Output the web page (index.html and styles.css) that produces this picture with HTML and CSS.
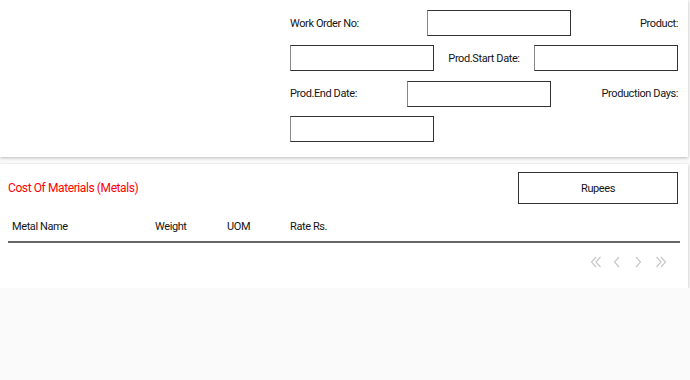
FILE: index.html
```html
<!DOCTYPE html>
<html lang="en">
<head>
  <meta charset="UTF-8">
  <meta name="viewport" content="width=device-width, initial-scale=1.0">
  <title>Work Order Costing</title>
  <link rel="stylesheet" href="styles.css">
</head>
<body>
  <div class="card card-top">
    <div class="spacer"></div>
    <div class="fields">
      <label>Work Order No:</label>
      <input type="text" class="field-input">
      <label>Product:</label>
      <input type="text" class="field-input">
      <label>Prod.Start Date:</label>
      <input type="text" class="field-input">
      <label>Prod.End Date:</label>
      <input type="text" class="field-input">
      <label>Production Days:</label>
      <input type="text" class="field-input">
    </div>
  </div>

  <div class="card card-metals">
    <div class="section-head">
      <span class="section-title">Cost Of Materials (Metals)</span>
      <div class="currency-box">Rupees</div>
    </div>

    <table class="metal-table">
      <thead>
        <tr>
          <th class="col-name">Metal Name</th>
          <th class="col-weight">Weight</th>
          <th class="col-uom">UOM</th>
          <th>Rate Rs.</th>
        </tr>
      </thead>
    </table>

    <div class="pager">
      <!-- first / prev / next / last -->
      <svg width="12" height="12" viewBox="0 0 12 12"><polyline points="6,1 1.5,6 6,11"/><polyline points="10.5,1 6,6 10.5,11"/></svg>
      <svg width="12" height="12" viewBox="0 0 12 12"><polyline points="8,1 3.5,6 8,11"/></svg>
      <svg width="12" height="12" viewBox="0 0 12 12"><polyline points="4,1 8.5,6 4,11"/></svg>
      <svg class="last" width="12" height="12" viewBox="0 0 12 12"><polyline points="1.5,1 6,6 1.5,11"/><polyline points="6,1 10.5,6 6,11"/></svg>
    </div>
  </div>
</body>
</html>
```

FILE: styles.css
```css
body {
  margin: 0;
  background-color: #fafafa;
  font-family: Roboto, "Liberation Sans", sans-serif;
  font-size: 11px;
  letter-spacing: -0.4px;
  color: #151515;
}
.card {
  background-color: #fff;
  margin-right: 2px;
  box-shadow: 0 1px 3px rgba(0,0,0,0.25);
}
.card-top {
  display: flex;
  padding: 10px 10px 15px 0;
}
.spacer {
  flex: 1;
}
.fields {
  width: 388px;
  display: flex;
  flex-wrap: wrap;
  justify-content: space-between;
  align-items: center;
  row-gap: 9.4px;
}
.field-input {
  width: 144px;
  height: 26px;
  box-sizing: border-box;
  border: 1px solid #333;
  border-left-color: #888;
  margin: 0;
  padding: 0 4px;
  font: inherit;
}
.card-metals {
  margin-top: 7px;
  padding: 8px 8px 20px 8px;
}
.section-head {
  display: flex;
  justify-content: space-between;
  align-items: center;
}
.section-title {
  color: #f00;
  font-size: 12px;
}
.currency-box {
  width: 160px;
  height: 32px;
  box-sizing: border-box;
  border: 1px solid #333;
  display: flex;
  align-items: center;
  justify-content: center;
  margin-right: 2px;
}
.metal-table {
  width: 100%;
  border-collapse: collapse;
  margin-top: 10px;
}
.metal-table th {
  text-align: left;
  font-weight: normal;
  padding: 6px 4px 8px 4px;
  border-bottom: 2px solid #666;
}
.col-name { width: 135px; }
.col-weight { width: 64px; }
.col-uom { width: 55px; }
.pager {
  display: flex;
  justify-content: flex-end;
  gap: 9px;
  padding: 13px 13px 0 0;
}
.pager .last {
  margin-left: 2px;
}
.pager svg {
  fill: none;
  stroke: #c8c8c8;
  stroke-width: 1.2;
}
```
